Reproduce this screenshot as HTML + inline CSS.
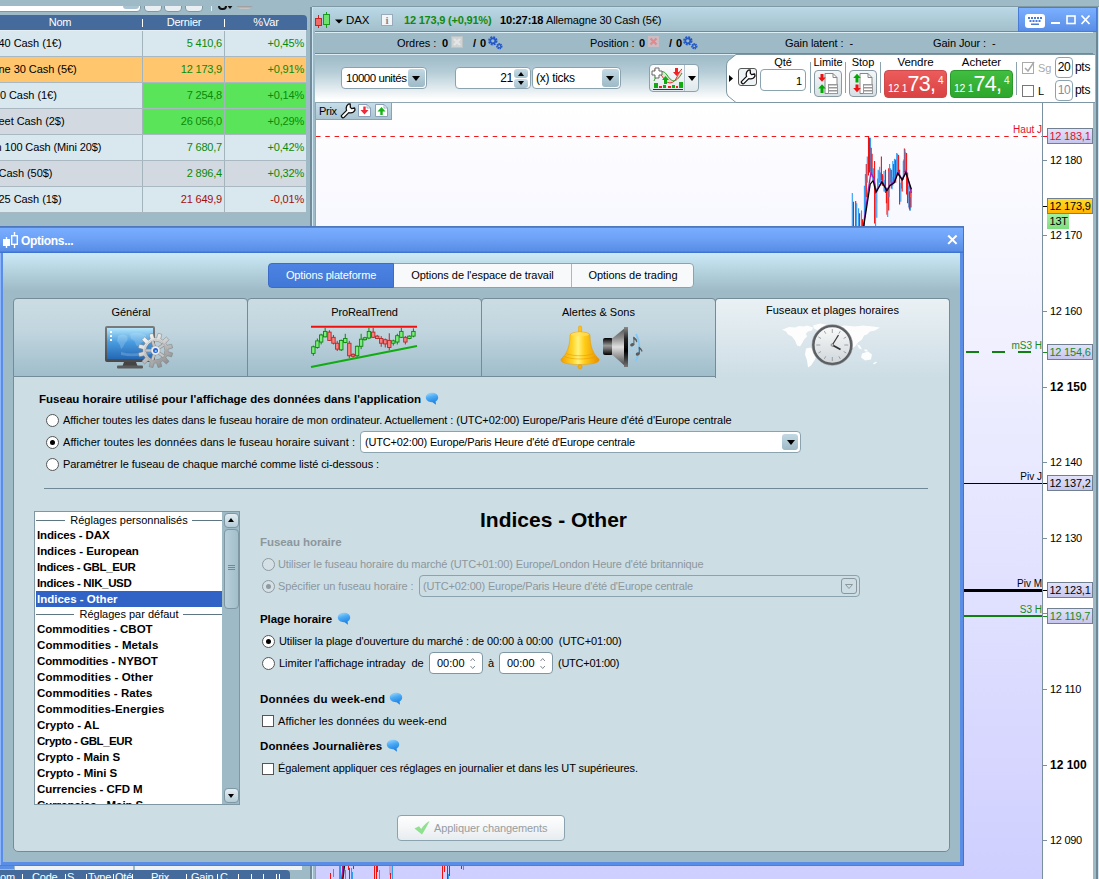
<!DOCTYPE html>
<html lang="fr">
<head>
<meta charset="utf-8">
<title>Options</title>
<style>
html,body{margin:0;padding:0;}
body{width:1099px;height:879px;overflow:hidden;position:relative;background:#9dbac6;font-family:"Liberation Sans",sans-serif;font-size:11px;color:#000;font-variant-ligatures:none;}
.abs{position:absolute;}
div,span,i,b{box-sizing:border-box;}
.t{position:absolute;white-space:nowrap;line-height:14px;height:14px;letter-spacing:-0.07px;}
.b{font-weight:bold;}
/* ---------- left list ---------- */
#lp{position:absolute;left:0;top:0;width:312px;height:227px;background:#9dbac6;overflow:hidden;}
.hdr{position:absolute;height:16px;background:#446b9b;color:#fff;font-size:11px;line-height:15px;border-radius:0 4px 0 0;letter-spacing:-0.2px;}
.hdr span{position:absolute;top:0;text-align:center;}
.hdr i{position:absolute;top:4px;width:1px;height:8px;background:#fff;}
.row{position:absolute;left:0;width:306px;height:26px;line-height:25px;font-size:11px;border-bottom:1px solid #a9b8c1;letter-spacing:-0.2px;}
.row .n{position:absolute;left:0;top:0;width:142px;height:25px;white-space:nowrap;text-indent:-1.5px;overflow:hidden;letter-spacing:-0.05px;}
.row .d{position:absolute;left:142px;top:0;width:82px;height:25px;text-align:right;padding-right:2px;border-left:1px solid #a4b4bd;}
.row .v{position:absolute;left:224px;top:0;width:82px;height:25px;text-align:right;padding-right:2px;border-left:1px solid #a4b4bd;}
.g{color:#0a8a0a;}
.r{color:#a50c0c;}
/* ---------- chart window ---------- */
#cw{position:absolute;left:312px;top:6px;width:787px;height:873px;background:#9dbac6;}
.axl{position:absolute;left:1050px;font-size:11px;line-height:14px;height:14px;white-space:nowrap;letter-spacing:-0.3px;}
.axt{position:absolute;left:1043px;width:4px;height:1px;background:#7a909e;}
.pl{position:absolute;left:1047px;width:46px;height:16px;font-size:11px;line-height:14px;text-align:center;border:1px solid #708090;background:#d0d0f4;white-space:nowrap;letter-spacing:-0.2px;}
.ll{position:absolute;font-size:10px;line-height:12px;height:12px;white-space:nowrap;text-align:right;}
/* ---------- dialog ---------- */
#dlg{position:absolute;left:0;top:227px;width:963px;height:638px;background:#5b8fe6;}
.tab{position:absolute;top:298px;height:79px;border:1px solid #748c98;border-radius:4px 4px 0 0;background:linear-gradient(#cbdce3 0%,#c2d6df 40%,#9fbdcb 100%);}
.radio{position:absolute;width:13px;height:13px;border-radius:50%;background:#fff;border:1px solid #555;}
.radio.on::after{content:"";position:absolute;left:3px;top:3px;width:5px;height:5px;border-radius:50%;background:#000;}
.radio.dis{border-color:#8f9aa0;background:#d4e0e6;}
.radio.dis.on::after{background:#8f9aa0;}
.chk{position:absolute;width:12px;height:12px;background:#fff;border:1px solid #555;}
.li{position:absolute;left:36px;width:186px;height:16px;line-height:16px;font-weight:bold;font-size:11.5px;white-space:nowrap;padding-left:1px;letter-spacing:0;}
.lh{position:absolute;left:36px;width:186px;height:14px;line-height:14px;font-size:11px;text-align:center;white-space:nowrap;}
.lh i{position:absolute;top:7px;height:1px;background:#5e7682;}
.spin{position:absolute;width:54px;height:22px;background:#fff;border:1px solid #7e97a3;border-radius:4px;font-size:11px;line-height:20px;padding-left:7px;}
.axl.b{font-size:12px;letter-spacing:0;}
</style>
</head>
<body>
<!-- LEFT LIST PANEL -->
<div id="lp">
  <div class="abs" style="left:-4px;top:-4px;width:145px;height:16px;background:#fff;border:1px solid #7e97a3;border-radius:4px;"></div>
  <div class="abs" style="left:123px;top:-4px;width:16px;height:13px;background:#a9c4d0;border-radius:3px;"></div>
  <div class="abs" style="left:144px;top:-6px;width:18px;height:18px;background:#e8eef1;border:1px solid #7e97a3;border-radius:4px;"></div>
  <div class="abs" style="left:164px;top:-6px;width:18px;height:18px;background:#e8eef1;border:1px solid #7e97a3;border-radius:4px;"></div>
  <div class="abs" style="left:185px;top:-6px;width:18px;height:18px;background:#e8eef1;border:1px solid #7e97a3;border-radius:4px;"></div>
  <div class="abs" style="left:211px;top:5px;width:1px;height:6px;background:#e8f0f4;"></div>
  <div class="abs" style="left:218px;top:2px;width:9px;height:8px;border:2px solid #111;border-radius:4px;"></div>
  <div class="abs" style="left:226px;top:4px;width:0;height:0;border-left:4px solid transparent;border-right:4px solid transparent;border-top:5px solid #111;"></div>
  <div class="abs" style="left:236px;top:4px;width:17px;height:5px;background:linear-gradient(#777,#ccc);border-radius:0 0 6px 6px;"></div>
  <div class="abs" style="left:0;top:0;width:312px;height:6px;background:#9dbac6;"></div>
  <div class="abs" style="left:0;top:30px;width:306px;height:1px;background:#e4eef3;"></div>
  <div class="hdr" style="left:0;top:15px;width:307px;height:15px;"><span style="left:0;width:120px;">Nom</span><i style="left:142px"></i><span style="left:143px;width:82px;">Dernier</span><i style="left:224px"></i><span style="left:226px;width:80px;">%Var</span></div>
  <div class="row" style="top:31px;background:#d9e7ee;"><div class="n">40 Cash (1€)</div><div class="d g">5 410,6</div><div class="v g">+0,45%</div></div>
  <div class="row" style="top:57px;background:#ffc66d;"><div class="n">ne 30 Cash (5€)</div><div class="d g">12 173,9</div><div class="v g">+0,91%</div></div>
  <div class="row" style="top:83px;background:#d9e7ee;"><div class="n" style="text-indent:-6.200px">00 Cash (1€)</div><div class="d g" style="background:#5ae45a">7 254,8</div><div class="v g" style="background:#5ae45a">+0,14%</div></div>
  <div class="row" style="top:109px;background:#d2d9e0;"><div class="n">eet Cash (2$)</div><div class="d g" style="background:#5ae45a">26 056,0</div><div class="v g" style="background:#5ae45a">+0,29%</div></div>
  <div class="row" style="top:135px;background:#d9e7ee;"><div class="n" style="text-indent:-4.500px;letter-spacing:-0.12px">n 100 Cash (Mini 20$)</div><div class="d g">7 680,7</div><div class="v g">+0,42%</div></div>
  <div class="row" style="top:161px;background:#d2d9e0;"><div class="n">Cash (50$)</div><div class="d g">2 896,4</div><div class="v g">+0,32%</div></div>
  <div class="row" style="top:187px;background:#d9e7ee;"><div class="n">25 Cash (1$)</div><div class="d r">21 649,9</div><div class="v r">-0,01%</div></div>
</div>
<!-- bottom-left strip under dialog -->
<div class="abs" style="left:0;top:865px;width:312px;height:14px;background:#9dbac6;"></div>
<div class="abs" style="left:0;top:866px;width:14px;height:3px;background:#5b8fe6;"></div>
<div class="abs" style="left:15px;top:866px;width:118px;height:4px;background:#eef2f4;"></div>
<div class="abs" style="left:135px;top:866px;width:167px;height:4px;background:#eef2f4;"></div>
<div class="hdr" style="left:0;top:869.500px;width:290px;height:10px;overflow:hidden;">
  <span style="left:0px;">om</span><i style="left:22px"></i><span style="left:32px;">Code</span><i style="left:65px"></i><span style="left:67px;">S.</span><i style="left:86px"></i><span style="left:88px;">Type</span><i style="left:113px"></i><span style="left:115px;">Qté</span><i style="left:132px"></i><span style="left:151px;">Prix</span><i style="left:186px"></i><span style="left:191px;">Gain</span><i style="left:217px"></i><span style="left:220px;">C</span><i style="left:238px"></i><i style="left:251px"></i><i style="left:263px"></i><i style="left:276px"></i><i style="left:279px"></i>
</div>
<!-- vertical splitter -->
<div class="abs" style="left:307px;top:0;width:5px;height:879px;background:#9dbac6;"></div>
<div class="abs" style="left:310px;top:7px;width:2px;height:872px;background:#738b98;"></div>
<!-- CHART WINDOW -->
<div id="cw">
  <!-- frame lines -->
  <div class="abs" style="left:0;top:0;width:787px;height:1px;background:#7f99a5;"></div>
  <div class="abs" style="left:0;top:1px;width:787px;height:1px;background:#c3dbe6;"></div>
  <!-- title bar 8..31 (local 2..25) -->
  <div class="abs" style="left:1px;top:2px;width:786px;height:23px;background:linear-gradient(#b9d7e4,#a2bfcb);"></div>
  <div class="abs" style="left:3px;top:25px;width:778px;height:1px;background:#728a96;"></div>
  <div class="abs" style="left:3px;top:26px;width:778px;height:1px;background:#dceef6;"></div>
  <!-- orders bar 33..53 -->
  <div class="abs" style="left:1px;top:27px;width:780px;height:20px;background:#9dbac6;"></div>
  <div class="abs" style="left:3px;top:47px;width:778px;height:1px;background:#728a96;"></div>
  <div class="abs" style="left:3px;top:48px;width:778px;height:1px;background:#dceef6;"></div>
  <!-- toolbar 55..102 -->
  <div class="abs" style="left:3px;top:49px;width:778px;height:47px;background:linear-gradient(#9dbac6 0%,#b4ccd6 35%,#ffffff 95%);"></div>
  <!-- right border band -->
  <div class="abs" style="left:781px;top:26px;width:3px;height:847px;background:#9dbac6;"></div>
  <div class="abs" style="left:784px;top:1px;width:2px;height:872px;background:#6f8794;"></div>
  <div class="abs" style="left:786px;top:1px;width:1px;height:872px;background:#cfe8f5;"></div>
  <div class="abs" style="left:0;top:1px;width:1px;height:872px;background:#cfe8f5;"></div>
  <!-- axis white area -->
  <div class="abs" style="left:731px;top:49px;width:50px;height:824px;background:#fff;"></div>
  <!-- chart area -->
  <div class="abs" style="left:3px;top:96px;width:728px;height:777px;background:linear-gradient(#ffffff 0%,#cfcfff 100%);border-right:1px solid #7a909e;border-left:1px solid #8fa7b3;border-top:1px solid #8fa7b3;"></div>

  <!-- title content -->
  <svg class="abs" style="left:3px;top:5px" width="30" height="20" viewBox="0 0 30 20">
    <line x1="3.5" y1="4" x2="3.5" y2="17" stroke="#c22" stroke-width="1"/><rect x="0.5" y="7.500" width="6" height="7" fill="#f06a6a" stroke="#c22"/>
    <line x1="11.500" y1="1" x2="11.500" y2="17" stroke="#1a9a1a" stroke-width="1"/><rect x="8.500" y="3.500" width="6" height="10" fill="#6fe26f" stroke="#1a9a1a"/>
    <path d="M20 8.500h8l-4 4z" fill="#000"/>
  </svg>
  <div class="t" style="left:34px;top:7px;font-size:11.5px;">DAX</div>
  <div class="abs" style="left:69px;top:8px;width:12px;height:12px;background:#f2f6f8;border:1px solid #9ab;font-family:'Liberation Serif',serif;font-weight:bold;font-size:11px;line-height:10px;text-align:center;color:#7a8a94;">i</div>
  <div class="t b g" style="left:92px;top:7px;letter-spacing:-0.2px;color:#108a10;">12 173,9 (+0,91%)</div>
  <div class="t b" style="left:188px;top:7px;letter-spacing:-0.1px;">10:27:18</div>
  <div class="t" style="left:234px;top:7px;letter-spacing:-0.15px;">Allemagne 30 Cash (5€)</div>
  <!-- window controls -->
  <div class="abs" style="left:706px;top:1px;width:79px;height:25px;background:linear-gradient(#7bafff,#5a8ee6);border:1px solid #4a7cd6;"></div>
  <svg class="abs" style="left:712px;top:7px" width="70" height="18" viewBox="0 0 70 18">
    <rect x="1" y="1" width="20" height="14" rx="3" fill="#fff"/>
    <g fill="#4a7cd6"><rect x="4" y="4" width="2" height="2"/><rect x="7" y="4" width="2" height="2"/><rect x="10" y="4" width="2" height="2"/><rect x="13" y="4" width="2" height="2"/><rect x="16" y="4" width="2" height="2"/>
    <rect x="5.500" y="7" width="2" height="2"/><rect x="8.500" y="7" width="2" height="2"/><rect x="11.500" y="7" width="2" height="2"/><rect x="14.500" y="7" width="2" height="2"/><rect x="7" y="10.500" width="8" height="1.500"/></g>
    <rect x="27" y="9" width="9" height="2" fill="#fff"/>
    <rect x="43" y="3" width="8" height="7.500" fill="none" stroke="#fff" stroke-width="1.600"/>
    <path d="M57.500 2.500l8 8.500M65.500 2.500l-8 8.500" stroke="#fff" stroke-width="1.800" fill="none"/>
  </svg>
  <!-- orders bar content -->
  <div class="t" style="left:85px;top:30px;">Ordres :</div><div class="t b" style="left:130px;top:30px;">0</div>
  <div class="abs" style="left:139px;top:30px;width:12px;height:12px;background:#cfd3d3;border:1px solid #bcc4c6;"></div>
  <svg class="abs" style="left:139px;top:30px" width="12" height="12"><path d="M3 3l6 6M9 3l-6 6" stroke="#e4e6e6" stroke-width="2.400"/></svg>
  <div class="t b" style="left:161px;top:30px;letter-spacing:0.5px;">/ 0</div>
  <svg class="abs gear" style="left:175px;top:29px" width="16" height="15" viewBox="0 0 16 15"><g fill="none" stroke="#2458c8"><circle cx="5.800" cy="5.800" r="3.500" stroke-width="2.400" stroke-dasharray="1.750 1"/><circle cx="5.800" cy="5.800" r="2.500" stroke-width="1.700"/><circle cx="12.300" cy="11.200" r="2.300" stroke-width="1.800" stroke-dasharray="1.200 0.600"/><circle cx="12.300" cy="11.200" r="1.600" stroke-width="1.100"/></g></svg>
  <div class="t" style="left:278px;top:30px;">Position :</div><div class="t b" style="left:327px;top:30px;">0</div>
  <div class="abs" style="left:336px;top:30px;width:11px;height:11px;background:#c9bcc2;"></div>
  <svg class="abs" style="left:336px;top:30px" width="11" height="11"><path d="M2.500 2.500l6 6M8.500 2.500l-6 6" stroke="#e08a90" stroke-width="2.200"/></svg>
  <div class="t b" style="left:357px;top:30px;letter-spacing:0.5px;">/ 0</div>
  <svg class="abs gear" style="left:370px;top:29px" width="16" height="15" viewBox="0 0 16 15"><g fill="none" stroke="#2458c8"><circle cx="5.800" cy="5.800" r="3.500" stroke-width="2.400" stroke-dasharray="1.750 1"/><circle cx="5.800" cy="5.800" r="2.500" stroke-width="1.700"/><circle cx="12.300" cy="11.200" r="2.300" stroke-width="1.800" stroke-dasharray="1.200 0.600"/><circle cx="12.300" cy="11.200" r="1.600" stroke-width="1.100"/></g></svg>
  <div class="t" style="left:473px;top:30px;">Gain latent :&nbsp; -</div>
  <div class="t" style="left:621px;top:30px;">Gain Jour :&nbsp; -</div>
</div>
<!-- TOOLBAR CONTENT (absolute page coords) -->
<div class="abs" style="left:341px;top:67px;width:86px;height:22px;background:#fff;border:1px solid #8aa3af;border-radius:4px;"></div>
<div class="t" style="left:346px;top:71px;font-size:11.5px;letter-spacing:-0.45px;">10000 unités</div>
<div class="abs" style="left:408px;top:69px;width:17px;height:18px;background:linear-gradient(#c2d9e4,#9dbac6);border-radius:3px;"></div>
<div class="abs" style="left:412px;top:76px;border-left:4px solid transparent;border-right:4px solid transparent;border-top:5px solid #000;"></div>

<div class="abs" style="left:455px;top:67px;width:76px;height:22px;background:#fff;border:1px solid #8aa3af;border-radius:4px;"></div>
<div class="t" style="left:499px;top:71px;font-size:12px;width:14px;text-align:right;letter-spacing:-0.3px;">21</div>
<div class="abs" style="left:514px;top:69px;width:14px;height:9px;background:linear-gradient(#c6dce6,#a6c1cc);border-radius:3px;"></div><div class="abs" style="left:514px;top:79px;width:14px;height:9px;background:linear-gradient(#c6dce6,#a6c1cc);border-radius:3px;"></div>
<div class="abs" style="left:518px;top:72px;border-left:3px solid transparent;border-right:3px solid transparent;border-bottom:4px solid #000;"></div>
<div class="abs" style="left:518px;top:81px;border-left:3px solid transparent;border-right:3px solid transparent;border-top:4px solid #000;"></div>
<div class="abs" style="left:532px;top:67px;width:89px;height:22px;background:#fff;border:1px solid #8aa3af;border-radius:4px;"></div>
<div class="t" style="left:536px;top:71px;font-size:12px;letter-spacing:-0.3px;">(x) ticks</div>
<div class="abs" style="left:602px;top:69px;width:17px;height:18px;background:linear-gradient(#c2d9e4,#9dbac6);border-radius:3px;"></div>
<div class="abs" style="left:606px;top:76px;border-left:4px solid transparent;border-right:4px solid transparent;border-top:5px solid #000;"></div>

<!-- indicator button -->
<div class="abs" style="left:649px;top:64px;width:50px;height:28px;background:linear-gradient(#fdfdfd,#dfe8ec);border:1px solid #8aa3af;border-radius:4px;"></div>
<div class="abs" style="left:684px;top:65px;width:1px;height:26px;background:#b5c4cc;"></div>
<div class="abs" style="left:688px;top:76px;border-left:4px solid transparent;border-right:4px solid transparent;border-top:5px solid #000;"></div>
<svg class="abs" style="left:651px;top:66px" width="33" height="25" viewBox="0 0 33 25">
  <path d="M3 15 C7 5,12 3,16 9 S24 19,31 7 L31 3 C27 5,25 17,19 17 S10 3,3 4z" fill="#cdeec4" opacity="0.900"/>
  <path d="M17 11 C20 16,24 17,27 13 L31 7 L31 3 C27 8,24 17,19 17z" fill="#f6c8c8" opacity="0.900"/>
  <path d="M3 4 C10 3,12 17,19 17 S27 5,31 3" fill="none" stroke="#d33" stroke-width="1"/>
  <path d="M3 15 C7 5,12 3,16 9 S24 19,31 7" fill="none" stroke="#2a9a2a" stroke-width="1"/>
  <path d="M4 2h4v3h3v4h-3v3h-4v-3h-3v-4h3z" fill="#fff" stroke="#666" stroke-width="1"/>
  <path d="M24 2h3v4h2l-3.500 4l-3.500-4h2z" fill="#e22"/>
  <path d="M13 18h3v-4h2l-3.500-4l-3.500 4h2z" fill="#1a1"/>
  <rect x="3" y="17" width="4" height="5" fill="#1a1"/><rect x="8" y="20" width="3" height="2" fill="#e22"/><rect x="12" y="19" width="3" height="3" fill="#1a1"/><rect x="17" y="20" width="3" height="2" fill="#e22"/><rect x="21" y="19" width="3" height="3" fill="#1a1"/><rect x="25" y="20" width="2" height="2" fill="#e22"/><rect x="28" y="16" width="4" height="6" fill="#1a1"/>
  <rect x="2" y="23" width="30" height="1" fill="#22c"/>
</svg>

<!-- trading panel -->
<svg class="abs" style="left:725px;top:54px" width="370" height="49" viewBox="0 0 370 49">
  <path d="M370 0.500 L11 0.500 L3 7 Q1.500 9,1.500 12 L1.500 37 Q1.500 40,3 42 L11 48.500 L370 48.500" fill="#fff" stroke="#7e97a3" stroke-width="1"/>
  <path d="M4 21l4 3.500l-4 3.500z" fill="#000"/>
</svg>
<div class="abs" style="left:738px;top:68px;width:19px;height:18px;background:#eef3f5;border:1px solid #555;border-radius:3px;"></div>
<svg class="abs" style="left:740px;top:69px" width="16" height="16" viewBox="0 0 16 16"><path d="M1.600 12.400 L6.600 7.400 C5.800 5,6.400 2.600,8.200 1.200 L10.200 1 L10.400 4.400 L11.600 5.600 L14.600 5 L15 7 C13.800 9.400,11 10.200,8.800 9.600 L3.800 14.600 C2.800 15.600,0.600 13.400,1.600 12.400z" fill="#fff" stroke="#111" stroke-width="1.300" stroke-linejoin="round"/></svg>
<div class="t" style="left:760px;top:55px;width:46px;text-align:center;font-size:11px;letter-spacing:-0.05px;">Qté</div>
<div class="abs" style="left:760px;top:69px;width:46px;height:22px;background:#fff;border:1px solid #8aa3af;border-radius:4px;"></div>
<div class="t" style="left:780px;top:74px;width:22px;text-align:right;">1</div>
<div class="abs" style="left:810px;top:62px;width:1px;height:31px;background:#8aa3af;"></div>
<div class="t" style="left:812px;top:55px;width:32px;text-align:center;font-size:11px;letter-spacing:-0.05px;">Limite</div>
<div class="abs" style="left:814px;top:70px;width:28px;height:27px;background:linear-gradient(#f4f7f8,#d6e0e5);border:1px solid #8a9aa3;border-radius:4px;"></div>
<svg class="abs" style="left:816px;top:72px" width="24" height="23" viewBox="0 0 24 23">
  <path d="M9 1.500h8l4 4v16h-12z" fill="#fff" stroke="#888" stroke-width="1"/><path d="M17 1.500v4h4" fill="none" stroke="#888"/>
  <rect x="12" y="12" width="10" height="10" fill="#999"/><rect x="13" y="13.500" width="8" height="1.500" fill="#fff"/><rect x="13" y="16.500" width="8" height="1.500" fill="#fff"/><rect x="13" y="19.500" width="8" height="1.500" fill="#fff"/>
  <path d="M4.500 2h3v3.500h2.300l-3.800 4.300l-3.800-4.300h2.300z" fill="#e11"/>
  <path d="M4.500 21h3v-4.500h2.300l-3.800-4.300l-3.800 4.300h2.300z" fill="#0a0"/>
</svg>
<div class="abs" style="left:845px;top:62px;width:1px;height:31px;background:#8aa3af;"></div>
<div class="t" style="left:848px;top:55px;width:30px;text-align:center;font-size:11px;letter-spacing:-0.05px;">Stop</div>
<div class="abs" style="left:849px;top:70px;width:28px;height:27px;background:linear-gradient(#f4f7f8,#d6e0e5);border:1px solid #8a9aa3;border-radius:4px;"></div>
<svg class="abs" style="left:851px;top:72px" width="24" height="23" viewBox="0 0 24 23">
  <path d="M9 1.500h8l4 4v16h-12z" fill="#fff" stroke="#888" stroke-width="1"/><path d="M17 1.500v4h4" fill="none" stroke="#888"/>
  <rect x="12" y="12" width="10" height="10" fill="#999"/><rect x="13" y="13.500" width="8" height="1.500" fill="#fff"/><rect x="13" y="16.500" width="8" height="1.500" fill="#fff"/><rect x="13" y="19.500" width="8" height="1.500" fill="#fff"/>
  <path d="M4.500 10.500h3v-4.500h2.300l-3.800-4.300l-3.800 4.300h2.300z" fill="#0a0"/>
  <path d="M4.500 12.500h3v3.500h2.300l-3.800 4.300l-3.800-4.300h2.300z" fill="#e11"/>
</svg>
<div class="abs" style="left:880px;top:62px;width:1px;height:31px;background:#8aa3af;"></div>
<div class="t" style="left:884px;top:55px;width:63px;text-align:center;font-size:11.5px;letter-spacing:-0.05px;">Vendre</div>
<div class="abs" style="left:884px;top:70px;width:63px;height:28px;background:linear-gradient(#ec5c5c,#d94242);border:1px solid #cf4a4a;border-radius:4px;color:#fff;"></div>
<div class="t" style="left:888px;top:81px;color:#fff;font-size:10.500px;letter-spacing:-0.3px;">12 1</div>
<div class="t" style="left:907.500px;top:71px;color:#fff;font-size:21.5px;line-height:26px;height:26px;letter-spacing:-0.7px;">73,</div>
<div class="t" style="left:938px;top:74px;color:#fff;font-size:10px;">4</div>
<div class="t" style="left:950px;top:55px;width:63px;text-align:center;font-size:11.5px;letter-spacing:-0.05px;">Acheter</div>
<div class="abs" style="left:950px;top:70px;width:63px;height:28px;background:linear-gradient(#40be40,#2ca62c);border:1px solid #2a9a2a;border-radius:4px;"></div>
<div class="t" style="left:954px;top:81px;color:#fff;font-size:10.500px;letter-spacing:-0.3px;">12 1</div>
<div class="t" style="left:973.500px;top:71px;color:#fff;font-size:21.5px;line-height:26px;height:26px;letter-spacing:-0.7px;">74,</div>
<div class="t" style="left:1004px;top:74px;color:#fff;font-size:10px;">4</div>
<div class="abs" style="left:1016px;top:62px;width:1px;height:33px;background:#8aa3af;"></div>
<div class="abs" style="left:1022px;top:62px;width:12px;height:12px;background:#fff;border:1px solid #aaa;"></div>
<svg class="abs" style="left:1022px;top:60px" width="14" height="14"><path d="M3 8l3 3l6-9" fill="none" stroke="#aaa" stroke-width="1.500"/></svg>
<div class="t" style="left:1038px;top:61px;color:#aaa;">Sg</div>
<div class="abs" style="left:1055px;top:57px;width:18px;height:21px;background:#fff;border:1px solid #8aa3af;border-radius:4px;"></div>
<div class="t" style="left:1055px;top:60px;width:18px;text-align:center;font-size:12px;letter-spacing:-0.3px;">20</div>
<div class="t" style="left:1075px;top:60px;font-size:12px;letter-spacing:-0.3px;">pts</div>
<div class="abs" style="left:1022px;top:85px;width:12px;height:12px;background:#fff;border:1px solid #777;"></div>
<div class="t" style="left:1038px;top:84px;">L</div>
<div class="abs" style="left:1055px;top:80px;width:18px;height:21px;background:#fff;border:1px solid #8aa3af;border-radius:4px;"></div>
<div class="t" style="left:1055px;top:83px;width:18px;text-align:center;font-size:12px;color:#8a8aa0;letter-spacing:-0.3px;">10</div>
<div class="t" style="left:1075px;top:83px;font-size:12px;letter-spacing:-0.3px;">pts</div>

<!-- Prix tab -->
<div class="abs" style="left:316px;top:103px;width:76px;height:17px;background:linear-gradient(#c6deea,#a9c4d0);border:1px solid #8aa3af;border-left:none;border-top:none;"></div>
<div class="t" style="left:319px;top:104px;letter-spacing:-0.3px;">Prix</div>
<svg class="abs" style="left:340px;top:103px" width="16" height="16" viewBox="0 0 16 16"><path d="M1.600 12.400 L6.600 7.400 C5.800 5,6.400 2.600,8.200 1.200 L10.200 1 L10.400 4.400 L11.600 5.600 L14.600 5 L15 7 C13.800 9.400,11 10.200,8.800 9.600 L3.800 14.600 C2.800 15.600,0.600 13.400,1.600 12.400z" fill="#fff" stroke="#111" stroke-width="1.300" stroke-linejoin="round"/></svg>
<svg class="abs" style="left:358px;top:104px" width="13" height="13" viewBox="0 0 13 13"><path d="M0.500 0.500h8.500l3.500 3.500v8.500h-12z" fill="#fff" stroke="#8aa0b8"/><path d="M9 0.500v3.500h3.500" fill="none" stroke="#8aa0b8" stroke-width="0.800"/><path d="M5.300 2.500h2.400v3.500h2.800l-4 4.500l-4-4.500h2.800z" fill="#f02a3a"/></svg>
<svg class="abs" style="left:375px;top:104px" width="13" height="13" viewBox="0 0 13 13"><path d="M0.500 0.500h8.500l3.500 3.500v8.500h-12z" fill="#fff" stroke="#8aa0b8"/><path d="M9 0.500v3.500h3.500" fill="none" stroke="#8aa0b8" stroke-width="0.800"/><path d="M5.300 11h2.400v-3.500h2.800l-4-4.500l-4 4.500h2.800z" fill="#14b414"/></svg>
<svg class="abs" style="left:314px;top:103px" width="729" height="776" viewBox="314 103 729 776">
<line x1="316" y1="136.500" x2="1042" y2="136.500" stroke="#f01818" stroke-width="1" stroke-dasharray="4.500 4.800"/>
<g opacity="0.55">
<polygon points="863.7,226.4 868.0,191.5 870.9,172.6 870.2,184.2 866.6,203.2" fill="#9fd08f"/>
<polygon points="905.9,172.6 911.4,189.3 911.4,197.3 907.3,185.7" fill="#e89a9a"/>
<polygon points="873.1,180.6 876.0,192.2 877.5,203.2 875.0,197.3" fill="#e89a9a"/>
</g>
<line x1="852.3" y1="193.0" x2="852.3" y2="226.4" stroke="#2f9bf5" stroke-width="1.100"/>
<line x1="853.5" y1="201.7" x2="853.5" y2="226.4" stroke="#f01010" stroke-width="1.100"/>
<line x1="855.7" y1="201.0" x2="855.7" y2="226.4" stroke="#f01010" stroke-width="1.100"/>
<line x1="856.7" y1="203.2" x2="856.7" y2="226.4" stroke="#2f9bf5" stroke-width="1.100"/>
<line x1="858.6" y1="208.3" x2="858.6" y2="226.4" stroke="#2f9bf5" stroke-width="1.100"/>
<line x1="859.6" y1="213.3" x2="859.6" y2="226.4" stroke="#f01010" stroke-width="1.100"/>
<line x1="861.5" y1="210.4" x2="861.5" y2="226.4" stroke="#2f9bf5" stroke-width="1.100"/>
<line x1="862.5" y1="219.2" x2="862.5" y2="226.4" stroke="#f01010" stroke-width="1.100"/>
<line x1="864.4" y1="185.7" x2="864.4" y2="226.4" stroke="#2f9bf5" stroke-width="1.100"/>
<line x1="865.4" y1="174.0" x2="865.4" y2="211.9" stroke="#2f9bf5" stroke-width="1.100"/>
<line x1="866.3" y1="163.9" x2="866.3" y2="197.3" stroke="#f01010" stroke-width="1.100"/>
<line x1="867.3" y1="156.6" x2="867.3" y2="182.8" stroke="#2f9bf5" stroke-width="1.100"/>
<line x1="868.5" y1="136.5" x2="868.5" y2="175.5" stroke="#f01010" stroke-width="1.100"/>
<line x1="869.5" y1="137.7" x2="869.5" y2="172.6" stroke="#f01010" stroke-width="1.100"/>
<line x1="870.1" y1="143.5" x2="870.1" y2="168.2" stroke="#f01010" stroke-width="1.100"/>
<line x1="870.5" y1="137.7" x2="870.5" y2="171.1" stroke="#2f9bf5" stroke-width="1.100"/>
<line x1="871.2" y1="147.8" x2="871.2" y2="174.0" stroke="#f01010" stroke-width="1.100"/>
<line x1="872.1" y1="153.7" x2="872.1" y2="177.0" stroke="#f01010" stroke-width="1.100"/>
<line x1="872.7" y1="168.2" x2="872.7" y2="179.9" stroke="#2f9bf5" stroke-width="1.100"/>
<line x1="873.6" y1="168.2" x2="873.6" y2="178.4" stroke="#2f9bf5" stroke-width="1.100"/>
<line x1="874.6" y1="160.9" x2="874.6" y2="223.5" stroke="#f01010" stroke-width="1.100"/>
<line x1="875.6" y1="191.5" x2="875.6" y2="226.4" stroke="#2f9bf5" stroke-width="1.100"/>
<line x1="876.8" y1="188.6" x2="876.8" y2="217.7" stroke="#2f9bf5" stroke-width="1.100"/>
<line x1="877.6" y1="178.4" x2="877.6" y2="191.5" stroke="#2f9bf5" stroke-width="1.100"/>
<line x1="878.2" y1="169.7" x2="878.2" y2="185.7" stroke="#2f9bf5" stroke-width="1.100"/>
<line x1="879.1" y1="171.1" x2="879.1" y2="182.8" stroke="#2f9bf5" stroke-width="1.100"/>
<line x1="879.7" y1="166.8" x2="879.7" y2="182.8" stroke="#2f9bf5" stroke-width="1.100"/>
<line x1="880.6" y1="172.6" x2="880.6" y2="184.2" stroke="#2f9bf5" stroke-width="1.100"/>
<line x1="881.4" y1="156.6" x2="881.4" y2="179.9" stroke="#f01010" stroke-width="1.100"/>
<line x1="882.3" y1="174.0" x2="882.3" y2="185.7" stroke="#f01010" stroke-width="1.100"/>
<line x1="882.9" y1="175.5" x2="882.9" y2="185.7" stroke="#f01010" stroke-width="1.100"/>
<line x1="884.0" y1="171.1" x2="884.0" y2="191.5" stroke="#2f9bf5" stroke-width="1.100"/>
<line x1="884.8" y1="179.9" x2="884.8" y2="191.5" stroke="#2f9bf5" stroke-width="1.100"/>
<line x1="885.5" y1="169.7" x2="885.5" y2="193.0" stroke="#f01010" stroke-width="1.100"/>
<line x1="886.4" y1="188.6" x2="886.4" y2="203.2" stroke="#f01010" stroke-width="1.100"/>
<line x1="887.0" y1="191.5" x2="887.0" y2="214.8" stroke="#f01010" stroke-width="1.100"/>
<line x1="887.7" y1="191.5" x2="887.7" y2="217.0" stroke="#2f9bf5" stroke-width="1.100"/>
<line x1="888.7" y1="168.2" x2="888.7" y2="210.4" stroke="#f01010" stroke-width="1.100"/>
<line x1="889.1" y1="171.1" x2="889.1" y2="197.3" stroke="#2f9bf5" stroke-width="1.100"/>
<line x1="889.6" y1="163.9" x2="889.6" y2="185.7" stroke="#2f9bf5" stroke-width="1.100"/>
<line x1="890.5" y1="168.2" x2="890.5" y2="182.8" stroke="#2f9bf5" stroke-width="1.100"/>
<line x1="891.3" y1="169.7" x2="891.3" y2="188.6" stroke="#f01010" stroke-width="1.100"/>
<line x1="892.1" y1="177.0" x2="892.1" y2="189.3" stroke="#2f9bf5" stroke-width="1.100"/>
<line x1="892.8" y1="160.9" x2="892.8" y2="185.7" stroke="#2f9bf5" stroke-width="1.100"/>
<line x1="893.7" y1="163.9" x2="893.7" y2="182.8" stroke="#f01010" stroke-width="1.100"/>
<line x1="894.5" y1="158.8" x2="894.5" y2="182.8" stroke="#2f9bf5" stroke-width="1.100"/>
<line x1="895.1" y1="160.9" x2="895.1" y2="179.9" stroke="#2f9bf5" stroke-width="1.100"/>
<line x1="895.7" y1="159.5" x2="895.7" y2="182.8" stroke="#f01010" stroke-width="1.100"/>
<line x1="896.7" y1="152.9" x2="896.7" y2="174.0" stroke="#2f9bf5" stroke-width="1.100"/>
<line x1="897.6" y1="153.7" x2="897.6" y2="171.1" stroke="#2f9bf5" stroke-width="1.100"/>
<line x1="898.6" y1="155.1" x2="898.6" y2="175.5" stroke="#f01010" stroke-width="1.100"/>
<line x1="899.6" y1="169.7" x2="899.6" y2="204.6" stroke="#f01010" stroke-width="1.100"/>
<line x1="900.8" y1="182.8" x2="900.8" y2="201.7" stroke="#2f9bf5" stroke-width="1.100"/>
<line x1="901.5" y1="178.4" x2="901.5" y2="188.6" stroke="#2f9bf5" stroke-width="1.100"/>
<line x1="902.2" y1="179.9" x2="902.2" y2="191.5" stroke="#f01010" stroke-width="1.100"/>
<line x1="903.3" y1="160.9" x2="903.3" y2="179.9" stroke="#2f9bf5" stroke-width="1.100"/>
<line x1="903.8" y1="159.5" x2="903.8" y2="174.0" stroke="#2f9bf5" stroke-width="1.100"/>
<line x1="904.4" y1="148.6" x2="904.4" y2="172.6" stroke="#f01010" stroke-width="1.100"/>
<line x1="905.0" y1="149.3" x2="905.0" y2="171.1" stroke="#2f9bf5" stroke-width="1.100"/>
<line x1="905.6" y1="152.2" x2="905.6" y2="172.6" stroke="#2f9bf5" stroke-width="1.100"/>
<line x1="906.6" y1="152.9" x2="906.6" y2="194.4" stroke="#f01010" stroke-width="1.100"/>
<line x1="907.6" y1="172.6" x2="907.6" y2="203.2" stroke="#f01010" stroke-width="1.100"/>
<line x1="908.8" y1="185.7" x2="908.8" y2="207.5" stroke="#2f9bf5" stroke-width="1.100"/>
<line x1="909.4" y1="191.5" x2="909.4" y2="209.0" stroke="#f01010" stroke-width="1.100"/>
<line x1="909.8" y1="191.5" x2="909.8" y2="210.4" stroke="#f01010" stroke-width="1.100"/>
<line x1="910.4" y1="197.3" x2="910.4" y2="210.4" stroke="#2f9bf5" stroke-width="1.100"/>
<line x1="911.0" y1="188.6" x2="911.0" y2="207.5" stroke="#f01010" stroke-width="1.100"/>
<polyline fill="none" stroke="#a020c0" stroke-width="1.300" points="863.4,226.4 868.0,191.5 870.9,172.6 873.9,178.4 876.2,191.5 881.9,181.0 887.0,189.8 889.9,185.0 894.2,181.6 897.9,171.9 902.2,179.6 905.9,170.8 911.4,193.0"/>
<polyline fill="none" stroke="#000" stroke-width="1.250" points="863.7,226.4 870.2,184.2 873.1,180.6 876.0,192.2 881.9,182.1 887.0,190.8 889.9,185.7 894.2,182.8 897.9,173.3 902.2,179.9 905.9,172.6 911.4,189.3"/>
<line x1="963" y1="352" x2="1042" y2="352" stroke="#108010" stroke-width="2" stroke-dasharray="13 13" stroke-dashoffset="-3"/>
<line x1="963" y1="483.500" x2="1042" y2="483.500" stroke="#000" stroke-width="1"/>
<line x1="963" y1="590.500" x2="1042" y2="590.500" stroke="#000" stroke-width="3"/>
<line x1="963" y1="616" x2="1042" y2="616" stroke="#108010" stroke-width="2"/>
<rect x="389" y="866" width="3" height="9" fill="#d890a8" opacity="0.700"/>
<line x1="330.5" y1="873" x2="330.5" y2="879" stroke="#f01010" stroke-width="1"/>
<line x1="333.5" y1="869" x2="333.5" y2="877" stroke="#2f9bf5" stroke-width="1"/>
<line x1="339.5" y1="866" x2="339.5" y2="879" stroke="#2f9bf5" stroke-width="1"/>
<line x1="340.5" y1="866" x2="340.5" y2="879" stroke="#2f9bf5" stroke-width="1"/>
<line x1="342.5" y1="866" x2="342.5" y2="879" stroke="#f01010" stroke-width="1"/>
<line x1="343.5" y1="866" x2="343.5" y2="876" stroke="#f01010" stroke-width="1"/>
<line x1="345.5" y1="870" x2="345.5" y2="879" stroke="#2f9bf5" stroke-width="1"/>
<line x1="348.5" y1="866" x2="348.5" y2="870" stroke="#f01010" stroke-width="1"/>
<line x1="349.5" y1="868" x2="349.5" y2="879" stroke="#f01010" stroke-width="1"/>
<line x1="351.5" y1="868" x2="351.5" y2="879" stroke="#2f9bf5" stroke-width="1"/>
<line x1="352.5" y1="872" x2="352.5" y2="879" stroke="#2f9bf5" stroke-width="1"/>
<line x1="353.5" y1="866" x2="353.5" y2="869" stroke="#f01010" stroke-width="1"/>
<line x1="374.5" y1="866" x2="374.5" y2="879" stroke="#f01010" stroke-width="1"/>
<line x1="376.5" y1="866" x2="376.5" y2="879" stroke="#f01010" stroke-width="1"/>
<line x1="377.5" y1="866" x2="377.5" y2="872" stroke="#f01010" stroke-width="1"/>
<line x1="379.5" y1="870" x2="379.5" y2="879" stroke="#2f9bf5" stroke-width="1"/>
<line x1="390.5" y1="873" x2="390.5" y2="879" stroke="#f01010" stroke-width="1"/>
<line x1="392.5" y1="866" x2="392.5" y2="879" stroke="#2f9bf5" stroke-width="1"/>
<line x1="442.5" y1="866" x2="442.5" y2="879" stroke="#f01010" stroke-width="1"/>
<line x1="444.5" y1="866" x2="444.5" y2="872" stroke="#f01010" stroke-width="1"/>
<line x1="447.5" y1="866" x2="447.5" y2="879" stroke="#f01010" stroke-width="1"/>
<line x1="448.5" y1="874" x2="448.5" y2="879" stroke="#2f9bf5" stroke-width="1"/>
<line x1="449.5" y1="866" x2="449.5" y2="876" stroke="#f01010" stroke-width="1"/>
<line x1="461.5" y1="866" x2="461.5" y2="869" stroke="#f01010" stroke-width="1"/>
<line x1="463.5" y1="866" x2="463.5" y2="870" stroke="#2f9bf5" stroke-width="1"/>
<path d="M343 866 L341.500 879" stroke="#a020c0" stroke-width="1" fill="none"/>
<path d="M344.500 866 L343 879" stroke="#111" stroke-width="1.200" fill="none"/>
</svg>
<div class="axt" style="top:160px"></div>
<div class="axl" style="top:153px">12 180</div>
<div class="axt" style="top:235px"></div>
<div class="axl" style="top:228px">12 170</div>
<div class="axt" style="top:311px"></div>
<div class="axl" style="top:304px">12 160</div>
<div class="axt" style="top:387px"></div>
<div class="axl b" style="top:380px">12 150</div>
<div class="axt" style="top:462px"></div>
<div class="axl" style="top:455px">12 140</div>
<div class="axt" style="top:538px"></div>
<div class="axl" style="top:531px">12 130</div>
<div class="axt" style="top:613px"></div>
<div class="axl" style="top:606px">12 120</div>
<div class="axt" style="top:689px"></div>
<div class="axl" style="top:682px">12 110</div>
<div class="axt" style="top:765px"></div>
<div class="axl b" style="top:758px">12 100</div>
<div class="axt" style="top:840px"></div>
<div class="axl" style="top:833px">12 090</div>
<div class="axt" style="top:136px;background:#e0102a"></div>
<div class="pl" style="top:128px;background:linear-gradient(#e2e2fb,#c6c6ee);color:#e0102a">12 183,1</div>
<div class="axt" style="top:206px;background:#000"></div>
<div class="pl" style="top:198px;background:linear-gradient(#ffdc28,#ffb400);color:#000">12 173,9</div>
<div class="axt" style="top:352px;background:#1a8a1a"></div>
<div class="pl" style="top:344px;background:linear-gradient(#e2e2fb,#c6c6ee);color:#1a8a1a">12 154,6</div>
<div class="axt" style="top:483px;background:#000"></div>
<div class="pl" style="top:475px;background:linear-gradient(#e2e2fb,#c6c6ee);color:#000">12 137,2</div>
<div class="axt" style="top:590px;background:#000"></div>
<div class="pl" style="top:582px;background:linear-gradient(#e2e2fb,#c6c6ee);color:#000">12 123,1</div>
<div class="axt" style="top:616px;background:#1a8a1a"></div>
<div class="pl" style="top:608px;background:linear-gradient(#e2e2fb,#c6c6ee);color:#1a8a1a">12 119,7</div>
<!-- axis extras -->
<div class="abs" style="left:1047px;top:214px;width:22px;height:15px;background:linear-gradient(#a4f0a4,#7ede7e);font-size:11px;line-height:14px;padding-left:2.500px;letter-spacing:-0.2px;">13T</div>
<div class="ll" style="left:990px;width:52px;top:123.500px;color:#e0102a;">Haut J</div>
<div class="ll" style="left:990px;width:52px;top:339.500px;color:#1a8a1a;">mS3 H</div>
<div class="ll" style="left:990px;width:52px;top:470.500px;color:#000;">Piv J</div>
<div class="ll" style="left:990px;width:52px;top:577.500px;color:#000;">Piv M</div>
<div class="ll" style="left:990px;width:52px;top:603.500px;color:#1a8a1a;">S3 H</div>
<!-- ================= OPTIONS DIALOG ================= -->
<div class="abs" style="left:0;top:226px;width:964px;height:1px;background:#4f78bc;"></div>
<div id="dlg" style="left:0;top:227px;width:964px;height:639px;background:#5a8ee6;"></div>
<div class="abs" style="left:0;top:227px;width:1px;height:638px;background:#8db6fb;"></div>
<div class="abs" style="left:0;top:227px;width:964px;height:26px;background:linear-gradient(#4f82d8 0,#4f82d8 1px,#78adff 1px,#6ea3f8 40%,#5a8ee6 24px,#3f74d0 25px,#3f74d0 26px);"></div>
<!-- title icon -->
<svg class="abs" style="left:2px;top:231px" width="18" height="18" viewBox="0 0 18 18">
  <rect x="1" y="8" width="7" height="7" fill="#fff"/><rect x="3.800" y="6" width="1.400" height="11" fill="#fff"/>
  <rect x="9.700" y="4.700" width="5.600" height="8.600" fill="none" stroke="#fff" stroke-width="1.400"/><rect x="11.800" y="1" width="1.400" height="3.500" fill="#fff"/><rect x="11.800" y="13.500" width="1.400" height="3.500" fill="#fff"/>
</svg>
<div class="t b" style="left:21px;top:234px;color:#fff;font-size:12px;letter-spacing:-0.3px;">Options...</div>
<svg class="abs" style="left:945px;top:233px" width="14" height="14" viewBox="0 0 14 14"><path d="M3.200 2.500l8.400 8.400M11.600 2.500l-8.400 8.400" stroke="#fff" stroke-width="2" fill="none"/></svg>
<div class="abs" style="left:963px;top:227px;width:1px;height:639px;background:#3f74d0;"></div>
<div class="abs" style="left:0;top:865px;width:964px;height:1px;background:#4a7fdc;"></div>
<!-- content -->
<div class="abs" style="left:3px;top:253px;width:957px;height:609px;background:linear-gradient(#cbe9f6 0px,#9dbac6 38px,#9dbac6 100%);"></div>
<!-- mode buttons -->
<div class="abs" style="left:268px;top:263px;width:426px;height:25px;background:#f7f9fa;border:1px solid #8aa3af;border-radius:4px;"></div>
<div class="abs" style="left:268px;top:263px;width:126px;height:25px;background:linear-gradient(#4d83e2,#4177d6);border:1px solid #3a6cc8;border-radius:4px 0 0 4px;"></div>
<div class="abs" style="left:571px;top:264px;width:1px;height:23px;background:#a9b9c2;"></div>
<div class="t" style="left:268px;top:268px;width:126px;text-align:center;color:#fff;letter-spacing:-0.15px;">Options plateforme</div>
<div class="t" style="left:394px;top:268px;width:177px;text-align:center;letter-spacing:-0.05px;">Options de l'espace de travail</div>
<div class="t" style="left:572px;top:268px;width:122px;text-align:center;letter-spacing:-0.05px;">Options de trading</div>
<!-- tabs -->
<div class="tab" style="left:13px;width:235px;"></div>
<div class="tab" style="left:247px;width:235px;"></div>
<div class="tab" style="left:481px;width:235px;"></div>
<!-- panel -->
<div class="abs" style="left:13px;top:376px;width:937px;height:476px;background:#ccdde4;border:1px solid #748c98;border-radius:0 0 5px 5px;"></div>
<div class="abs" style="left:715px;top:298px;width:235px;height:80px;border:1px solid #748c98;border-bottom:none;border-radius:4px 4px 0 0;background:linear-gradient(#eaf1f4 0%,#d6e3ea 70%,#ccdde4 100%);"></div>
<div class="t" style="left:14px;top:305px;width:234px;text-align:center;font-size:11px;letter-spacing:0px;">Général</div>
<div class="t" style="left:247px;top:305px;width:235px;text-align:center;font-size:11px;letter-spacing:-0.15px;">ProRealTrend</div>
<div class="t" style="left:481px;top:305px;width:235px;text-align:center;font-size:11px;letter-spacing:0.02px;">Alertes &amp; Sons</div>
<div class="t" style="left:715px;top:303px;width:235px;text-align:center;font-size:11px;letter-spacing:0.01px;">Fuseaux et plages horaires</div>
<svg class="abs" style="left:104px;top:325px" width="72" height="46" viewBox="0 0 72 46">
 <defs>
  <linearGradient id="scr" x1="0" y1="0" x2="0" y2="1"><stop offset="0" stop-color="#b4e6fa"/><stop offset="0.45" stop-color="#4a9ce0"/><stop offset="1" stop-color="#2468b4"/></linearGradient>
  <linearGradient id="gr" gradientUnits="userSpaceOnUse" x1="-12" y1="-16" x2="10" y2="17"><stop offset="0" stop-color="#ffffff"/><stop offset="0.45" stop-color="#cdcdcd"/><stop offset="1" stop-color="#858585"/></linearGradient>
  <linearGradient id="frm" x1="0" y1="0" x2="0" y2="1"><stop offset="0" stop-color="#7a7a7a"/><stop offset="1" stop-color="#4a4a4a"/></linearGradient>
 </defs>
 <rect x="1" y="1" width="50" height="36" rx="2" fill="url(#frm)"/>
 <rect x="3" y="3" width="46" height="31" fill="url(#scr)"/>
 <path d="M14 11 q5 -3 9 0 q2 4 -2 7 q-2 5 -4 6 q-1 -5 -4 -8z M26 9 q8 -3 16 1 q1 5 -5 8 q-3 5 -5 2 q-1 -5 -5 -6z M17 27 q14 4 30 -2 v4 q-16 4 -30 1z" fill="#d8f0ff" opacity="0.22"/>
 <rect x="6" y="6" width="2" height="2" fill="#fff"/><rect x="6" y="10" width="2" height="2" fill="#fff"/><rect x="6" y="14" width="2" height="2" fill="#fff"/>
 <path d="M20 37h12l1.500 4h-15z" fill="#444"/><rect x="13" y="40.500" width="26" height="3" rx="1" fill="#5a5a5a"/>
 <g transform="translate(51.500,25.500)">
  <path d="M1.21 -12.54 L2.56 -17.11 A17.3 17.3 0 0 1 6.34 -16.1 L5.23 -11.47 A12.6 12.6 0 0 1 7.32 -10.26 L10.77 -13.54 A17.3 17.3 0 0 1 13.54 -10.77 L10.26 -7.32 A12.6 12.6 0 0 1 11.47 -5.23 L16.1 -6.34 A17.3 17.3 0 0 1 17.11 -2.56 L12.54 -1.21 A12.6 12.6 0 0 1 12.54 1.21 L17.11 2.56 A17.3 17.3 0 0 1 16.1 6.34 L11.47 5.23 A12.6 12.6 0 0 1 10.26 7.32 L13.54 10.77 A17.3 17.3 0 0 1 10.77 13.54 L7.32 10.26 A12.6 12.6 0 0 1 5.23 11.47 L6.34 16.1 A17.3 17.3 0 0 1 2.56 17.11 L1.21 12.54 A12.6 12.6 0 0 1 -1.21 12.54 L-2.56 17.11 A17.3 17.3 0 0 1 -6.34 16.1 L-5.23 11.47 A12.6 12.6 0 0 1 -7.32 10.26 L-10.77 13.54 A17.3 17.3 0 0 1 -13.54 10.77 L-10.26 7.32 A12.6 12.6 0 0 1 -11.47 5.23 L-16.1 6.34 A17.3 17.3 0 0 1 -17.11 2.56 L-12.54 1.21 A12.6 12.6 0 0 1 -12.54 -1.21 L-17.11 -2.56 A17.3 17.3 0 0 1 -16.1 -6.34 L-11.47 -5.23 A12.6 12.6 0 0 1 -10.26 -7.32 L-13.54 -10.77 A17.3 17.3 0 0 1 -10.77 -13.54 L-7.32 -10.26 A12.6 12.6 0 0 1 -5.23 -11.47 L-6.34 -16.1 A17.3 17.3 0 0 1 -2.56 -17.11 L-1.21 -12.54 A12.6 12.6 0 0 1 1.21 -12.54Z M9.4 0 A9.4 9.4 0 1 0 -9.4 0 A9.4 9.4 0 1 0 9.4 0Z" fill="url(#gr)" fill-rule="evenodd" stroke="#7c7c7c" stroke-width="0.500"/>
  <circle r="11" fill="none" stroke="#8d8d8d" stroke-width="0.350" opacity="0.800"/>
  <g stroke="#858585" stroke-width="3.300"><line x1="0" y1="0" x2="-10" y2="0"/><line x1="0" y1="0" x2="-3.100" y2="-9.500"/><line x1="0" y1="0" x2="8.100" y2="-5.900"/><line x1="0" y1="0" x2="8.100" y2="5.900"/><line x1="0" y1="0" x2="-3.100" y2="9.500"/></g>
  <g stroke="#c6c6c6" stroke-width="2.300"><line x1="0" y1="0" x2="-10" y2="0"/><line x1="0" y1="0" x2="-3.100" y2="-9.500"/><line x1="0" y1="0" x2="8.100" y2="-5.900"/><line x1="0" y1="0" x2="8.100" y2="5.900"/><line x1="0" y1="0" x2="-3.100" y2="9.500"/></g>
  <circle r="4.600" fill="#ececec" stroke="#999" stroke-width="0.500"/>
  <circle r="2.500" fill="#2a62d8"/><circle cx="0.300" cy="0.500" r="1.100" fill="#7fd8ff"/>
 </g>
</svg>
<svg class="abs" style="left:300px;top:320px" width="130" height="52" viewBox="300 320 130 52">
<line x1="311" y1="326.700" x2="417" y2="326.700" stroke="#f01010" stroke-width="2.100"/>
<line x1="311" y1="366.900" x2="417" y2="346" stroke="#10ac10" stroke-width="2"/>
<line x1="313.34" y1="345.59" x2="313.34" y2="355.77" stroke="#0c860c" stroke-width="1"/>
<rect x="311.64" y="346.78" width="3.400" height="6.62" fill="#7cec7c" stroke="#0c860c" stroke-width="0.900"/>
<line x1="317.36" y1="338.5" x2="317.36" y2="348.67" stroke="#0c860c" stroke-width="1"/>
<rect x="315.66" y="340.86" width="3.400" height="6.62" fill="#7cec7c" stroke="#0c860c" stroke-width="0.900"/>
<line x1="321.15" y1="333.77" x2="321.15" y2="344.41" stroke="#0c860c" stroke-width="1"/>
<rect x="319.45" y="334.95" width="3.400" height="7.1" fill="#7cec7c" stroke="#0c860c" stroke-width="0.900"/>
<line x1="325.17" y1="327.85" x2="325.17" y2="337.31" stroke="#0c860c" stroke-width="1"/>
<rect x="323.47" y="331.4" width="3.400" height="5.44" fill="#7cec7c" stroke="#0c860c" stroke-width="0.900"/>
<line x1="329.43" y1="330.22" x2="329.43" y2="340.86" stroke="#b82828" stroke-width="1"/>
<rect x="327.73" y="332.11" width="3.400" height="8.28" fill="#f58080" stroke="#b82828" stroke-width="0.900"/>
<line x1="333.45" y1="334.95" x2="333.45" y2="344.41" stroke="#b82828" stroke-width="1"/>
<rect x="331.75" y="337.31" width="3.400" height="5.91" fill="#f58080" stroke="#b82828" stroke-width="0.900"/>
<line x1="337.23" y1="340.86" x2="337.23" y2="351.04" stroke="#b82828" stroke-width="1"/>
<rect x="335.53" y="343.23" width="3.400" height="5.91" fill="#f58080" stroke="#b82828" stroke-width="0.900"/>
<line x1="341.25" y1="339.68" x2="341.25" y2="351.04" stroke="#0c860c" stroke-width="1"/>
<rect x="339.55" y="340.39" width="3.400" height="9.46" fill="#7cec7c" stroke="#0c860c" stroke-width="0.900"/>
<line x1="345.28" y1="333.77" x2="345.28" y2="343.23" stroke="#0c860c" stroke-width="1"/>
<rect x="343.58" y="338.5" width="3.400" height="4.02" fill="#7cec7c" stroke="#0c860c" stroke-width="0.900"/>
<line x1="349.3" y1="340.86" x2="349.3" y2="358.13" stroke="#b82828" stroke-width="1"/>
<rect x="347.6" y="343.23" width="3.400" height="12.54" fill="#f58080" stroke="#b82828" stroke-width="0.900"/>
<line x1="353.08" y1="353.4" x2="353.08" y2="357.66" stroke="#b82828" stroke-width="1"/>
<rect x="351.38" y="354.35" width="3.400" height="1.89" fill="#f58080" stroke="#b82828" stroke-width="0.900"/>
<line x1="357.1" y1="345.59" x2="357.1" y2="356.95" stroke="#0c860c" stroke-width="1"/>
<rect x="355.4" y="346.3" width="3.400" height="9.46" fill="#7cec7c" stroke="#0c860c" stroke-width="0.900"/>
<line x1="361.13" y1="333.77" x2="361.13" y2="349.14" stroke="#0c860c" stroke-width="1"/>
<rect x="359.43" y="339.21" width="3.400" height="7.1" fill="#7cec7c" stroke="#0c860c" stroke-width="0.900"/>
<line x1="364.91" y1="336.84" x2="364.91" y2="340.63" stroke="#0c860c" stroke-width="1"/>
<rect x="363.21" y="337.79" width="3.400" height="1.89" fill="#7cec7c" stroke="#0c860c" stroke-width="0.900"/>
<line x1="368.93" y1="327.85" x2="368.93" y2="339.21" stroke="#0c860c" stroke-width="1"/>
<rect x="367.23" y="331.4" width="3.400" height="6.62" fill="#7cec7c" stroke="#0c860c" stroke-width="0.900"/>
<line x1="373.19" y1="327.85" x2="373.19" y2="338.02" stroke="#b82828" stroke-width="1"/>
<rect x="371.49" y="332.11" width="3.400" height="5.2" fill="#f58080" stroke="#b82828" stroke-width="0.900"/>
<line x1="377.21" y1="334.95" x2="377.21" y2="339.21" stroke="#b82828" stroke-width="1"/>
<rect x="375.51" y="336.13" width="3.400" height="2.37" fill="#f58080" stroke="#b82828" stroke-width="0.900"/>
<line x1="381.23" y1="336.13" x2="381.23" y2="346.78" stroke="#b82828" stroke-width="1"/>
<rect x="379.53" y="338.5" width="3.400" height="4.73" fill="#f58080" stroke="#b82828" stroke-width="0.900"/>
<line x1="385.26" y1="338.5" x2="385.26" y2="347.49" stroke="#b82828" stroke-width="1"/>
<rect x="383.56" y="339.68" width="3.400" height="4.26" fill="#f58080" stroke="#b82828" stroke-width="0.900"/>
<line x1="389.28" y1="333.29" x2="389.28" y2="350.33" stroke="#b82828" stroke-width="1"/>
<rect x="387.58" y="340.39" width="3.400" height="7.1" fill="#f58080" stroke="#b82828" stroke-width="0.900"/>
<line x1="393.3" y1="339.68" x2="393.3" y2="345.59" stroke="#0c860c" stroke-width="1"/>
<rect x="391.6" y="340.86" width="3.400" height="2.37" fill="#7cec7c" stroke="#0c860c" stroke-width="0.900"/>
<line x1="397.32" y1="333.77" x2="397.32" y2="344.41" stroke="#0c860c" stroke-width="1"/>
<rect x="395.62" y="335.66" width="3.400" height="6.39" fill="#7cec7c" stroke="#0c860c" stroke-width="0.900"/>
<line x1="401.34" y1="327.85" x2="401.34" y2="338.02" stroke="#0c860c" stroke-width="1"/>
<rect x="399.64" y="331.4" width="3.400" height="5.91" fill="#7cec7c" stroke="#0c860c" stroke-width="0.900"/>
<line x1="405.37" y1="336.13" x2="405.37" y2="344.41" stroke="#b82828" stroke-width="1"/>
<rect x="403.67" y="337.31" width="3.400" height="4.73" fill="#f58080" stroke="#b82828" stroke-width="0.900"/>
<line x1="409.39" y1="335.42" x2="409.39" y2="339.21" stroke="#0c860c" stroke-width="1"/>
<rect x="407.69" y="336.13" width="3.400" height="2.37" fill="#7cec7c" stroke="#0c860c" stroke-width="0.900"/>
<line x1="413.41" y1="328.33" x2="413.41" y2="337.31" stroke="#0c860c" stroke-width="1"/>
<rect x="411.71" y="331.4" width="3.400" height="4.73" fill="#7cec7c" stroke="#0c860c" stroke-width="0.900"/>
</svg>
<svg class="abs" style="left:558px;top:324px" width="90" height="48" viewBox="0 0 90 48">
 <defs>
  <linearGradient id="bel" x1="0" y1="0" x2="1" y2="0"><stop offset="0" stop-color="#f09c00"/><stop offset="0.3" stop-color="#ffd428"/><stop offset="0.45" stop-color="#fff27a"/><stop offset="0.62" stop-color="#ffcc18"/><stop offset="1" stop-color="#e88e00"/></linearGradient>
  <linearGradient id="spk" x1="0" y1="0" x2="0" y2="1"><stop offset="0" stop-color="#555"/><stop offset="0.25" stop-color="#8c8c8c"/><stop offset="0.5" stop-color="#e0e0e0"/><stop offset="0.78" stop-color="#8a8a8a"/><stop offset="1" stop-color="#444"/></linearGradient>
  <linearGradient id="mag" x1="0" y1="0" x2="0" y2="1"><stop offset="0" stop-color="#000"/><stop offset="0.45" stop-color="#9a9a9a"/><stop offset="0.6" stop-color="#777"/><stop offset="1" stop-color="#000"/></linearGradient>
  <linearGradient id="plt" x1="0" y1="0" x2="0" y2="1"><stop offset="0" stop-color="#8a8a8a"/><stop offset="0.3" stop-color="#222"/><stop offset="0.6" stop-color="#000"/><stop offset="1" stop-color="#777"/></linearGradient>
 </defs>
 <rect x="20.500" y="2" width="3.200" height="7" rx="1.200" fill="#ffc010" stroke="#e89400" stroke-width="0.400"/>
 <path d="M12 11 C12 7,32 7,32 11 C32 22,35 30,41 35 C42 38,38 40.500,22 40.500 C6 40.500,2 38,3 35 C9 30,12 22,12 11z" fill="url(#bel)" stroke="#e89800" stroke-width="0.500"/>
 <ellipse cx="22" cy="10.300" rx="9.300" ry="2" fill="#ffe060" opacity="0.700"/>
 <path d="M8.500 29.500 C14 32.500,30 32.500,35.500 29.500" fill="none" stroke="#e89a00" stroke-width="0.700" opacity="0.800"/>
 <path d="M6.500 32.500 C13 35.800,31 35.800,37.500 32.500" fill="none" stroke="#e89a00" stroke-width="0.700" opacity="0.800"/>
 <circle cx="22" cy="42.800" r="2.100" fill="#f8b000" stroke="#e08c00" stroke-width="0.400"/>
 <rect x="45" y="14" width="10" height="17" rx="2" fill="url(#mag)"/>
 <path d="M54 14.500 L67 4 L67 42 L54 30.500z" fill="url(#spk)"/>
 <rect x="66" y="3" width="4" height="40" fill="url(#plt)"/>
 <path d="M78 10 q7 13 0 27" fill="none" stroke="#7cc8f8" stroke-width="1.800" opacity="0.900"/>
 <path d="M73 17 q3 7 -1 14" fill="none" stroke="#9ad4f8" stroke-width="1.500" stroke-dasharray="3 2" opacity="0.800"/>
 <path d="M77 23 q2 5 -2 11" fill="none" stroke="#9ad4f8" stroke-width="1.300" stroke-dasharray="3 2" opacity="0.700"/>
 <g fill="#5c5c5c"><ellipse cx="74.200" cy="20.800" rx="2.100" ry="1.600" transform="rotate(-20 74.200 20.800)"/><rect x="75.400" y="13" width="1" height="8"/><path d="M75.400 12.500 q3 1.500 4 5 l-0.800 1 q-1 -3 -3.200 -3.600z"/>
 <ellipse cx="79.700" cy="30" rx="2" ry="1.500" transform="rotate(-20 79.700 30)"/><rect x="80.800" y="23" width="1" height="7.200"/><path d="M80.800 22.500 q3 1.500 3.800 4.600 l-0.800 1 q-1 -2.600 -3 -3.200z"/></g>
</svg>
<svg class="abs" style="left:780px;top:320px" width="106" height="50" viewBox="0 0 106 50">
 <defs><linearGradient id="clk" x1="0" y1="0" x2="0" y2="1"><stop offset="0" stop-color="#fafafa"/><stop offset="1" stop-color="#cfd6da"/></linearGradient></defs>
 <g fill="#fff" opacity="0.950" transform="translate(0,2.500)">
  <path d="M4 6.500 l5 -2 l6 0.500 l4 -1.500 l5 0.500 l3 -1 l6 2 l-1 3 l-4 1 l-2 2 l1 3 l-3 3 l-2 4 l-2 3 l-3 -1 l-2 -5 l-3 -4 l-4 -2 l-2 -3 l-4 -2z"/>
  <path d="M26 26 l4 -1 l4 2 l3 4 l-2 6 l-4 6 l-3 2 l-1 -7 l-2 -6z"/>
  <path d="M33 3 l7 -2 l6 1 l-3 4 l-5 2 l-4 -2z"/>
  <path d="M47 8 l4 -3 l6 -1 l8 -1 l10 1 l8 -1 l10 1 l7 1 l-5 3 l-5 1 l-3 3 l-3 1 l-2 4 l-4 3 l-3 4 l-3 2 l-2 -3 l-3 -4 l-5 -1 l-4 -2 l-5 0 l-4 -3z"/>
  <path d="M49 18 l7 -1 l6 2 l3 4 l-2 7 l-4 8 l-4 1 l-3 -7 l-4 -6z"/>
  <path d="M82 31 l6 -2 l4 3 l-1 5 l-6 1 l-4 -3z"/>
  <path d="M77 22 l3 1 l2 4 l-3 -1z M84 27 l3 0 l1 2 l-3 0z M93 41 l3 -2 l1 1 l-3 2z"/>
 </g>
 <circle cx="52.300" cy="25" r="19" fill="url(#clk)" stroke="#5c5f62" stroke-width="2.600"/><circle cx="52.300" cy="25" r="20.300" fill="none" stroke="#8a8d90" stroke-width="0.500"/>
 <g stroke="#8a8f93" stroke-width="0.800">
  <line x1="52.300" y1="9" x2="52.300" y2="13"/><line x1="52.300" y1="37" x2="52.300" y2="41"/><line x1="36.300" y1="25" x2="40.300" y2="25"/><line x1="64.300" y1="25" x2="68.300" y2="25"/>
  <line x1="60.300" y1="11.100" x2="58.800" y2="13.700"/><line x1="66.200" y1="17" x2="63.600" y2="18.500"/><line x1="66.200" y1="33" x2="63.600" y2="31.500"/><line x1="60.300" y1="38.900" x2="58.800" y2="36.300"/>
  <line x1="44.300" y1="11.100" x2="45.800" y2="13.700"/><line x1="38.400" y1="17" x2="41" y2="18.500"/><line x1="38.400" y1="33" x2="41" y2="31.500"/><line x1="44.300" y1="38.900" x2="45.800" y2="36.300"/>
 </g>
 <line x1="52.300" y1="25" x2="58.500" y2="15" stroke="#333" stroke-width="1.200"/>
 <line x1="52.300" y1="25" x2="60.500" y2="29.500" stroke="#333" stroke-width="1.800"/>
 <circle cx="52.300" cy="25" r="1.300" fill="#ccc" stroke="#555" stroke-width="0.500"/>
</svg>
<div class="t b" style="left:39px;top:392px;font-size:11.5px;letter-spacing:0.02px;">Fuseau horaire utilisé pour l'affichage des données dans l'application</div>
<svg class="abs" style="left:425px;top:392px" width="14" height="14" viewBox="0 0 14 14"><defs><linearGradient id="bb425392" x1="0" y1="0" x2="0.3" y2="1"><stop offset="0" stop-color="#a8dcff"/><stop offset="0.45" stop-color="#4aaaf4"/><stop offset="1" stop-color="#1a80e4"/></linearGradient></defs><path d="M7 0.800c3.500 0 6.200 2 6.200 4.700c0 1.700-1 3.100-2.600 3.900L11 12.800L7.600 10.200C7.400 10.200 7.200 10.200 7 10.200C3.500 10.200 0.800 8.200 0.800 5.500S3.500 0.800 7 0.800z" fill="url(#bb425392)"/></svg>
<div class="radio" style="left:46px;top:414px;"></div>
<div class="t" style="left:63px;top:413px;">Afficher toutes les dates dans le fuseau horaire de mon ordinateur. Actuellement : (UTC+02:00) Europe/Paris Heure d'été d'Europe centrale</div>
<div class="radio on" style="left:46px;top:436px;"></div>
<div class="t" style="left:63px;top:435px;letter-spacing:0.06px;">Afficher toutes les données dans le fuseau horaire suivant :</div>
<div class="abs" style="left:360px;top:431px;width:441px;height:22px;background:#fff;border:1px solid #8aa3af;border-radius:4px;"></div>
<div class="t" style="left:365px;top:435px;letter-spacing:-0.17px;">(UTC+02:00) Europe/Paris Heure d'été d'Europe centrale</div>
<div class="abs" style="left:782px;top:434px;width:16px;height:16px;background:linear-gradient(#c2d9e4,#9dbac6);border-radius:3px;"></div>
<div class="abs" style="left:787px;top:440px;border-left:4px solid transparent;border-right:4px solid transparent;border-top:5px solid #000;"></div>
<div class="radio" style="left:46px;top:458px;"></div>
<div class="t" style="left:63px;top:457px;">Paramétrer le fuseau de chaque marché comme listé ci-dessous :</div>
<div class="abs" style="left:44px;top:488px;width:884px;height:1px;background:#6f8a97;"></div>
<div class="abs" style="left:34px;top:511px;width:206px;height:294px;background:#9dbac6;border:1px solid #7e97a3;"></div>
<div class="abs" style="left:35px;top:512px;width:187px;height:292px;background:#fff;overflow:hidden;" id="lst">
<div class="lh" style="left:1px;top:1px;">Réglages personnalisés<i style="left:0px;width:29px"></i><i style="left:156px;width:30px"></i></div>
<div class="li" style="left:1px;top:15px;letter-spacing:-0.13px;">Indices - DAX</div>
<div class="li" style="left:1px;top:31px;letter-spacing:-0.06px;">Indices - European</div>
<div class="li" style="left:1px;top:47px;letter-spacing:-0.38px;">Indices - GBL_EUR</div>
<div class="li" style="left:1px;top:63px;letter-spacing:-0.35px;">Indices - NIK_USD</div>
<div class="li" style="left:1px;top:79px; background:#3163c6;color:#fff;">Indices - Other</div>
<div class="lh" style="left:1px;top:95px;">Réglages par défaut<i style="left:0px;width:38px"></i><i style="left:147px;width:39px"></i></div>
<div class="li" style="left:1px;top:109px;">Commodities - CBOT</div>
<div class="li" style="left:1px;top:125px;letter-spacing:0.13px;">Commodities - Metals</div>
<div class="li" style="left:1px;top:141px;letter-spacing:-0.14px;">Commodities - NYBOT</div>
<div class="li" style="left:1px;top:157px;letter-spacing:0.12px;">Commodities - Other</div>
<div class="li" style="left:1px;top:173px;letter-spacing:0.06px;">Commodities - Rates</div>
<div class="li" style="left:1px;top:189px;letter-spacing:0.11px;">Commodities-Energies</div>
<div class="li" style="left:1px;top:205px;">Crypto - AL</div>
<div class="li" style="left:1px;top:221px;letter-spacing:-0.45px;">Crypto - GBL_EUR</div>
<div class="li" style="left:1px;top:237px;letter-spacing:-0.09px;">Crypto - Main S</div>
<div class="li" style="left:1px;top:253px;letter-spacing:-0.07px;">Crypto - Mini S</div>
<div class="li" style="left:1px;top:269px;letter-spacing:-0.06px;">Currencies - CFD M</div>
<div class="li" style="left:1px;top:285px;letter-spacing:-0.06px;">Currencies - Main S</div>
</div>
<div class="abs" style="left:224px;top:513px;width:15px;height:15px;background:linear-gradient(#e4eef2,#b4ccd7);border:1px solid #7e97a3;border-radius:4px;"></div>
<div class="abs" style="left:228px;top:518px;border-left:3.500px solid transparent;border-right:3.500px solid transparent;border-bottom:4px solid #000;"></div>
<div class="abs" style="left:224px;top:529px;width:15px;height:80px;background:linear-gradient(90deg,#b7cfda,#a3beca);border:1px solid #7e97a3;border-radius:4px;"></div>
<div class="abs" style="left:228px;top:565px;width:7px;height:1px;background:#6f8a97;box-shadow:0 2px 0 #6f8a97,0 4px 0 #6f8a97;"></div>
<div class="abs" style="left:224px;top:788px;width:15px;height:15px;background:linear-gradient(#e4eef2,#b4ccd7);border:1px solid #7e97a3;border-radius:4px;"></div>
<div class="abs" style="left:228px;top:794px;border-left:3.500px solid transparent;border-right:3.500px solid transparent;border-top:4px solid #000;"></div>
<div class="t b" style="left:480px;top:507px;font-size:21px;line-height:26px;height:26px;letter-spacing:0;">Indices - Other</div>
<div class="t b" style="left:260px;top:535px;font-size:11.5px;color:#8c979d;">Fuseau horaire</div>
<div class="radio dis" style="left:262px;top:558px;"></div>
<div class="t" style="left:278px;top:557px;letter-spacing:-0.12px;color:#8c979d;">Utiliser le fuseau horaire du marché (UTC+01:00) Europe/London Heure d'été britannique</div>
<div class="radio dis on" style="left:262px;top:580px;"></div>
<div class="t" style="left:278px;top:579px;color:#8c979d;">Spécifier un fuseau horaire :</div>
<div class="abs" style="left:419px;top:575px;width:441px;height:22px;border:1px solid #8aa3af;border-radius:4px;"></div>
<div class="t" style="left:423px;top:579px;letter-spacing:-0.17px;color:#8c979d;">(UTC+02:00) Europe/Paris Heure d'été d'Europe centrale</div>
<div class="abs" style="left:841px;top:578px;width:16px;height:16px;border:1px solid #8c979d;border-radius:3px;"></div>
<svg class="abs" style="left:844px;top:583px" width="10" height="7"><path d="M1.500 1.500h7l-3.500 4z" fill="none" stroke="#8c979d" stroke-width="1"/></svg>
<div class="t b" style="left:260px;top:612px;font-size:11.5px;">Plage horaire</div>
<svg class="abs" style="left:337px;top:612px" width="14" height="14" viewBox="0 0 14 14"><defs><linearGradient id="bb337612" x1="0" y1="0" x2="0.3" y2="1"><stop offset="0" stop-color="#a8dcff"/><stop offset="0.45" stop-color="#4aaaf4"/><stop offset="1" stop-color="#1a80e4"/></linearGradient></defs><path d="M7 0.800c3.500 0 6.200 2 6.200 4.700c0 1.700-1 3.100-2.600 3.900L11 12.800L7.600 10.200C7.400 10.200 7.200 10.200 7 10.200C3.500 10.200 0.800 8.200 0.800 5.500S3.500 0.800 7 0.800z" fill="url(#bb337612)"/></svg>
<div class="radio on" style="left:262px;top:635px;"></div>
<div class="t" style="left:279px;top:634px;letter-spacing:-0.1px;">Utiliser la plage d'ouverture du marché : de 00:00 à 00:00&nbsp; (UTC+01:00)</div>
<div class="radio" style="left:262px;top:657px;"></div>
<div class="t" style="left:279px;top:656px;letter-spacing:-0.03px;">Limiter l'affichage intraday&nbsp; de</div>
<div class="spin" style="left:429px;top:652px;">00:00</div>
<svg class="abs" style="left:468px;top:656px" width="9" height="15" viewBox="0 0 9 15"><path d="M2.500 5l2.200-2.500l2.200 2.500M2.500 10l2.200 2.500l2.200-2.500" fill="none" stroke="#7f8a90" stroke-width="1"/></svg>
<div class="t" style="left:488px;top:656px;">à</div>
<div class="spin" style="left:499px;top:652px;">00:00</div>
<svg class="abs" style="left:538px;top:656px" width="9" height="15" viewBox="0 0 9 15"><path d="M2.500 5l2.200-2.500l2.200 2.500M2.500 10l2.200 2.500l2.200-2.500" fill="none" stroke="#7f8a90" stroke-width="1"/></svg>
<div class="t" style="left:558px;top:656px;letter-spacing:-0.25px;">(UTC+01:00)</div>
<div class="t b" style="left:260px;top:692px;font-size:11.5px;letter-spacing:0.2px;">Données du week-end</div>
<svg class="abs" style="left:389px;top:692px" width="14" height="14" viewBox="0 0 14 14"><defs><linearGradient id="bb389692" x1="0" y1="0" x2="0.3" y2="1"><stop offset="0" stop-color="#a8dcff"/><stop offset="0.45" stop-color="#4aaaf4"/><stop offset="1" stop-color="#1a80e4"/></linearGradient></defs><path d="M7 0.800c3.500 0 6.200 2 6.200 4.700c0 1.700-1 3.100-2.600 3.900L11 12.800L7.600 10.200C7.400 10.200 7.200 10.200 7 10.200C3.500 10.200 0.800 8.200 0.800 5.500S3.500 0.800 7 0.800z" fill="url(#bb389692)"/></svg>
<div class="chk" style="left:262px;top:715px;"></div>
<div class="t" style="left:278px;top:714px;letter-spacing:0.1px;">Afficher les données du week-end</div>
<div class="t b" style="left:260px;top:739px;font-size:11.5px;letter-spacing:0.1px;">Données Journalières</div>
<svg class="abs" style="left:386px;top:739px" width="14" height="14" viewBox="0 0 14 14"><defs><linearGradient id="bb386739" x1="0" y1="0" x2="0.3" y2="1"><stop offset="0" stop-color="#a8dcff"/><stop offset="0.45" stop-color="#4aaaf4"/><stop offset="1" stop-color="#1a80e4"/></linearGradient></defs><path d="M7 0.800c3.500 0 6.200 2 6.200 4.700c0 1.700-1 3.100-2.600 3.900L11 12.800L7.600 10.200C7.400 10.200 7.200 10.200 7 10.200C3.500 10.200 0.800 8.200 0.800 5.500S3.500 0.800 7 0.800z" fill="url(#bb386739)"/></svg>
<div class="chk" style="left:262px;top:763px;"></div>
<div class="t" style="left:278px;top:761px;letter-spacing:-0.1px;">Également appliquer ces réglages en journalier et dans les UT supérieures.</div>
<div class="abs" style="left:397px;top:815px;width:168px;height:26px;background:linear-gradient(#fefefe,#f4f6f7 50%,#e6ecef);border:1px solid #8aa3af;border-radius:4px;"></div>
<svg class="abs" style="left:413px;top:819px" width="18" height="17" viewBox="0 0 18 17"><path d="M1.500 9.500l4.500-2.200l2.200 2.800C10.500 6.500,13 4,16.500 2C14.500 6,12 11,9 15.500z" fill="#8fe08f"/></svg>
<div class="t" style="left:434px;top:821px;color:#979da1;letter-spacing:-0.1px;">Appliquer changements</div>
</body></html>
